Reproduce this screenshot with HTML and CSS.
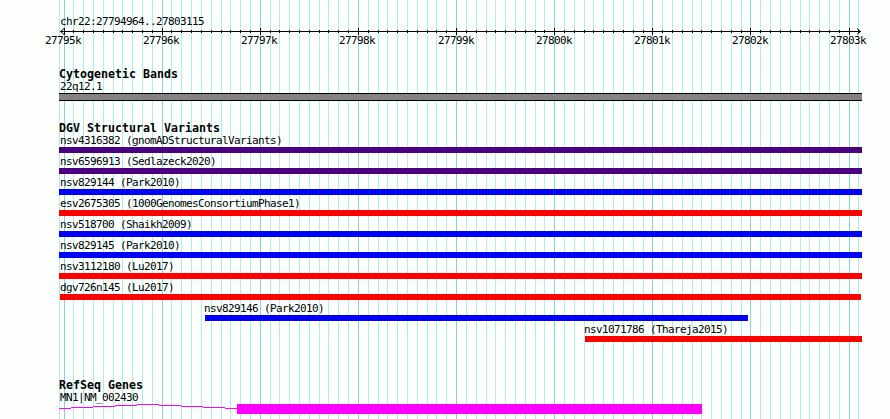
FILE: index.html
```
<!DOCTYPE html>
<html lang="en">
<head>
<meta charset="UTF-8">
<title>chr22:27794964..27803115</title>
<link rel="stylesheet" href="styles.css">
</head>
<body>
<div class="browser">
  <svg class="grid" id="grid" width="890" height="419"></svg>

  <div class="panel">
    <div class="label">chr22:27794964..27803115</div>
    <svg class="ruler" id="ruler" width="890" height="20"></svg>

    <div class="track cytoband">
      <div class="track-title">Cytogenetic Bands</div>
      <div class="label">22q12.1</div>
      <div class="band"></div>
    </div>

    <div class="track variants">
      <div class="track-title">DGV Structural Variants</div>
      <div class="feature">
        <div class="label">nsv4316382 (gnomADStructuralVariants)</div>
        <div class="bar complex"></div>
      </div>
      <div class="feature">
        <div class="label">nsv6596913 (Sedlazeck2020)</div>
        <div class="bar complex"></div>
      </div>
      <div class="feature">
        <div class="label">nsv829144 (Park2010)</div>
        <div class="bar gain"></div>
      </div>
      <div class="feature">
        <div class="label">esv2675305 (1000GenomesConsortiumPhase1)</div>
        <div class="bar loss"></div>
      </div>
      <div class="feature">
        <div class="label">nsv518700 (Shaikh2009)</div>
        <div class="bar gain"></div>
      </div>
      <div class="feature">
        <div class="label">nsv829145 (Park2010)</div>
        <div class="bar gain"></div>
      </div>
      <div class="feature">
        <div class="label">nsv3112180 (Lu2017)</div>
        <div class="bar loss"></div>
      </div>
      <div class="feature">
        <div class="label">dgv726n145 (Lu2017)</div>
        <div class="bar loss inset"></div>
      </div>
      <div class="feature" style="margin-left: 146px; width: 543px">
        <div class="label flush">nsv829146 (Park2010)</div>
        <div class="bar gain"></div>
      </div>
      <div class="feature" style="margin-left: 526px; width: 277px">
        <div class="label flush">nsv1071786 (Thareja2015)</div>
        <div class="bar loss"></div>
      </div>
    </div>

    <div class="track genes">
      <div class="track-title">RefSeq Genes</div>
      <div class="label">MN1|NM_002430</div>
      <div class="gene">
        <svg class="intron" width="178" height="10">
          <path d="M0 4.5H12M12 3.5H34M34 2.5H56M56 1.5H78M78 .5H100M100 1.5H122M122 2.5H144M144 3.5H166M166 4.5H178"/>
        </svg>
        <div class="exon"></div>
      </div>
    </div>
  </div>
</div>

<script>
const start = 27794964;
const end = 27803115;
const left = 60;
const scale = 800 / (end - start + 1);

function toX(bp) {
  return left + (bp - start) * scale;
}

let lines = '<path class="minor" d="M59.5 0V419"/>';
let ticks = '<path d="M60 3.5H861M64 0.5L60.5 3.5L64 6.5M857 0.5L860.5 3.5L857 6.5"/>';

for (let bp = 27795000; bp <= end; bp += 100) {
  const x = Math.round(toX(bp));
  const major = bp % 1000 === 0;
  lines += `<path class="${major ? 'major' : 'minor'}" d="M${x + 0.5} 0V419"/>`;
  ticks += `<path d="M${x + 0.5} ${major ? '0V7' : '2V5'}"/>`;
  if (major) {
    ticks += `<text x="${Math.floor(toX(bp)) - 18}" y="16">${bp / 1000}k</text>`;
  }
}

document.getElementById('grid').innerHTML = lines;
document.getElementById('ruler').innerHTML = ticks;
</script>
</body>
</html>
```
FILE: styles.css
```
* {
  margin: 0;
  padding: 0;
  box-sizing: border-box;
}

body {
  background: #fdfffc;
  color: #000;
  font-family: "DejaVu Sans Mono", monospace;
  font-size: 11px;
  line-height: 13px;
  letter-spacing: -0.622px;
}

svg {
  display: block;
}

.browser {
  position: relative;
  width: 890px;
  height: 419px;
  overflow: hidden;
}

/* guide lines run behind every track */
.grid {
  position: absolute;
  top: 0;
  left: 0;
}

.grid .minor {
  stroke: #afeeee;
}

.grid .major {
  stroke: #87ceeb;
}

.panel {
  position: relative;
  width: 862px;
  padding: 15px 0 0 59px;
}

.ruler {
  margin-left: -59px;
  overflow: visible;
}

.ruler path {
  fill: none;
  stroke: #000;
}

.label {
  height: 13px;
  padding-left: 1px;
  white-space: nowrap;
}

.label.flush {
  padding-left: 0;
  margin-left: -1px;
}

.track-title {
  height: 12px;
  font-size: 11.6px;
  font-weight: bold;
  letter-spacing: 0.016px;
  white-space: nowrap;
}

.cytoband {
  margin-top: 20px;
}

.band {
  height: 8px;
  background: #848284;
  border: solid #000;
  border-width: 1px 0;
}

.variants {
  margin-top: 21px;
}

.feature {
  height: 21px;
}

.bar {
  height: 6px;
}

.bar.complex {
  background: #4b0082;
}

.bar.gain {
  background: #00f;
}

.bar.loss {
  background: #f00;
}

.bar.inset {
  margin: 0 1px;
}

.genes {
  margin-top: 35px;
}

.gene {
  display: flex;
}

.intron path {
  stroke: #f0f;
}

.exon {
  width: 465px;
  height: 10px;
  background: #f0f;
}
```
